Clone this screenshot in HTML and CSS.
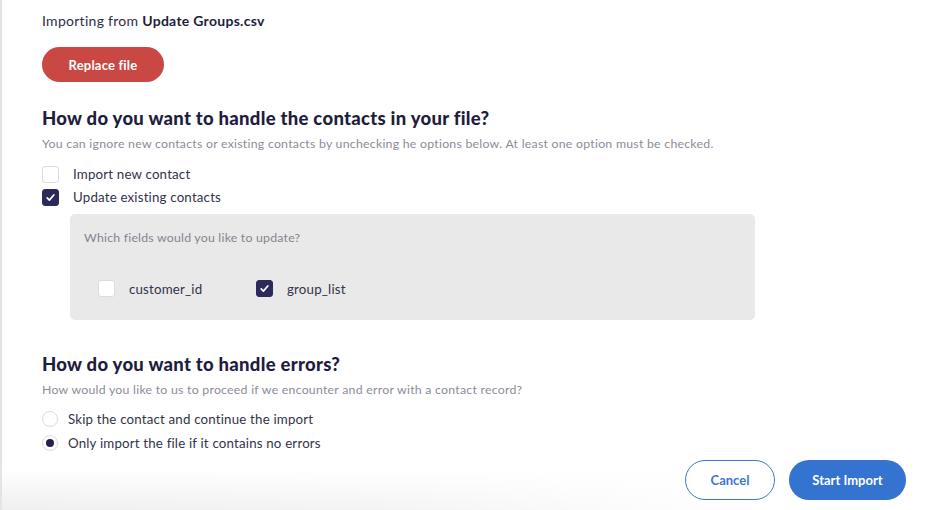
FILE: index.html
```html
<!DOCTYPE html>
<html lang="en">
<head>
<meta charset="utf-8">
<title>Import contacts</title>
<link rel="stylesheet" href="styles.css">
</head>
<body>
<div class="page">
  <main class="content">
    <p class="source">Importing from <strong>Update Groups.csv</strong></p>
    <button class="btn btn-danger">Replace file</button>

    <h2 class="heading h-contacts">How do you want to handle the contacts in your file?</h2>
    <p class="hint">You can ignore new contacts or existing contacts by unchecking he options below. At least one option must be checked.</p>

    <label class="check-row">
      <span class="box"></span>
      <span class="label">Import new contact</span>
    </label>
    <label class="check-row">
      <span class="box checked"><svg viewBox="0 0 17 17" width="17" height="17"><path d="M5.2 8.9 L7.4 11.1 L11.8 6" fill="none" stroke="#fff" stroke-width="1.7" stroke-linecap="round" stroke-linejoin="round"/></svg></span>
      <span class="label">Update existing contacts</span>
    </label>

    <div class="fields">
      <p class="fields-title">Which fields would you like to update?</p>
      <div class="fields-list">
        <label class="field">
          <span class="box"></span>
          <span class="label">customer_id</span>
        </label>
        <label class="field">
          <span class="box checked"><svg viewBox="0 0 17 17" width="17" height="17"><path d="M5.2 8.9 L7.4 11.1 L11.8 6" fill="none" stroke="#fff" stroke-width="1.7" stroke-linecap="round" stroke-linejoin="round"/></svg></span>
          <span class="label">group_list</span>
        </label>
      </div>
    </div>

    <h2 class="heading h-errors">How do you want to handle errors?</h2>
    <p class="hint">How would you like to us to proceed if we encounter and error with a contact record?</p>

    <label class="radio-row">
      <span class="radio"></span>
      <span class="label">Skip the contact and continue the import</span>
    </label>
    <label class="radio-row">
      <span class="radio selected"></span>
      <span class="label">Only import the file if it contains no errors</span>
    </label>
  </main>
  <footer class="footer">
    <button class="btn btn-outline">Cancel</button>
    <button class="btn btn-primary">Start Import</button>
  </footer>
</div>
</body>
</html>
```

FILE: styles.css
```css
* { box-sizing: border-box; }
html, body { margin: 0; padding: 0; background: #fff; }
body {
  font-family: Lato, "Noto Sans", sans-serif;
  color: #33334a;
  width: 944px;
  height: 510px;
  overflow: hidden;
}
.page {
  height: 510px;
  border-left: 2px solid #e4e4e4;
  display: flex;
  flex-direction: column;
}
.content {
  flex: 1;
  padding: 11px 0 0 40px;
}
.source {
  margin: 0;
  font-size: 14px;
  line-height: 20px;
  color: #2e2e44;
  letter-spacing: 0.28px;
}
.source strong { font-weight: 700; color: #1f1d3d; }
.btn {
  font-family: inherit;
  border-radius: 999px;
  font-size: 13px;
  font-weight: 700;
  cursor: pointer;
}
.btn-danger {
  margin-top: 16px;
  width: 122px;
  height: 35px;
  border: none;
  background: #c94843;
  color: #fff;
  letter-spacing: 0.2px;
}
.heading {
  margin: 0;
  font-size: 18.5px;
  font-weight: 900;
  color: #1f1d3d;
  line-height: 24px;
  letter-spacing: 0.27px;
}
.h-contacts { margin-top: 24px; }
.h-errors { margin-top: 32px; }
.hint {
  margin: 6px 0 0;
  font-size: 12.3px;
  line-height: 16px;
  color: #8c8c97;
  letter-spacing: 0.25px;
}
.check-row, .radio-row, .field {
  display: flex;
  align-items: center;
}
.check-row { margin-top: 13px; height: 18px; }
.check-row + .check-row { margin-top: 5px; }
.check-row .label { margin-left: 14px; }
.label {
  font-size: 13.3px;
  color: #33334a;
  letter-spacing: 0.18px;
}
.box {
  width: 17px;
  height: 17px;
  border-radius: 3px;
  border: 1px solid #dcdce0;
  background: #fff;
  display: inline-flex;
  flex-shrink: 0;
}
.box.checked {
  background: #2b2a5b;
  border-color: #2b2a5b;
}
.box svg { margin: -1px; }
.fields {
  margin: 8px 0 0 28px;
  width: 685px;
  height: 106px;
  background: #e9e9e9;
  border-radius: 5px;
  padding: 16px 14px 0;
}
.fields-title {
  margin: 0;
  font-size: 12.3px;
  line-height: 16px;
  color: #85858f;
  letter-spacing: 0.22px;
}
.fields-list {
  display: flex;
  margin: 34px 0 0 14px;
}
.field { width: 158px; }
.field .label { margin-left: 14px; }
.radio-row { margin-top: 12px; height: 18px; }
.radio-row + .radio-row { margin-top: 6px; }
.radio-row .label { margin-left: 10px; }
.radio {
  width: 16px;
  height: 16px;
  border-radius: 50%;
  border: 1px solid #dcdce0;
  background: #fff;
  position: relative;
  flex-shrink: 0;
}
.radio.selected::after {
  content: "";
  position: absolute;
  left: 3px;
  top: 3px;
  width: 8px;
  height: 8px;
  border-radius: 50%;
  background: #23214f;
}
.footer {
  height: 55px;
  display: flex;
  justify-content: flex-end;
  align-items: flex-start;
  gap: 14px;
  padding: 5px 38px 0 0;
  background:
    linear-gradient(to right, rgba(255,255,255,0) 0%, rgba(255,255,255,0.3) 40%, #fff 80%),
    linear-gradient(to bottom, #fff 0%, #fff 25%, #efefef 100%);
}
.btn-outline {
  width: 90px;
  height: 40px;
  background: #fff;
  border: 1px solid #3b77d2;
  color: #3b77d2;
}
.btn-primary {
  width: 117px;
  height: 40px;
  background: #3473d0;
  border: none;
  color: #fff;
}
```
